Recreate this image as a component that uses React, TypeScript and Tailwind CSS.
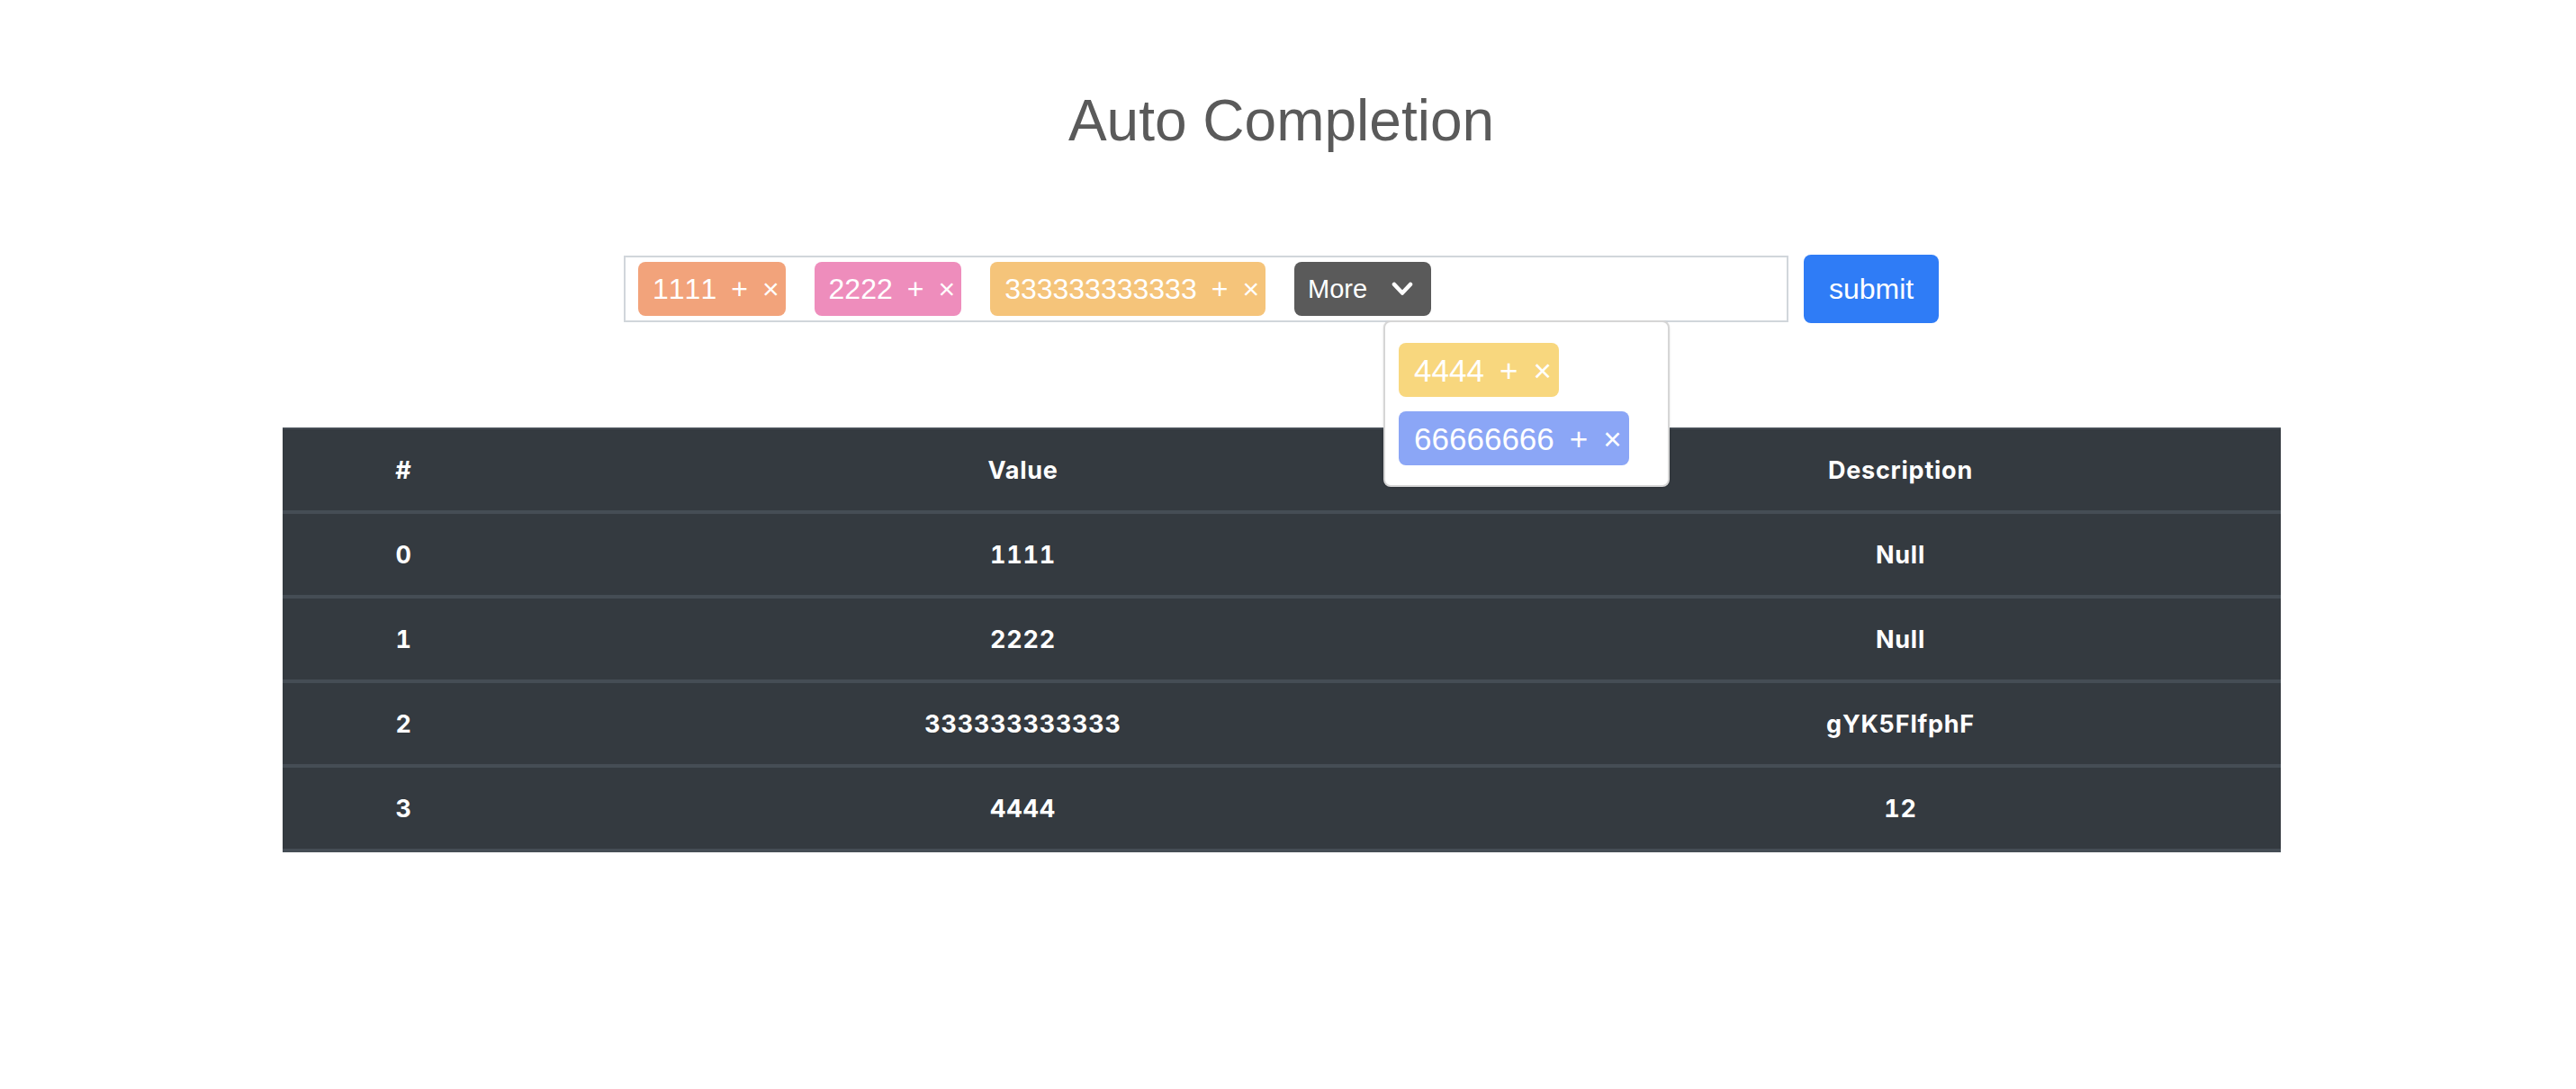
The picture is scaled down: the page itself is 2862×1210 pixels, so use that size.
type Tag = {
  label: string;
  color: string;
};

const inputTags: Tag[] = [
  { label: "1111", color: "bg-[#f2a37b]" },
  { label: "2222", color: "bg-[#ee8dbc]" },
  { label: "333333333333", color: "bg-[#f5c47a]" },
];

const moreTags: Tag[] = [
  { label: "4444", color: "bg-[#f8d77e]" },
  { label: "66666666", color: "bg-[#8ba6f6]" },
];

const rows = [
  { id: 0, value: "1111", description: "Null" },
  { id: 1, value: "2222", description: "Null" },
  { id: 2, value: "333333333333", description: "gYK5FlfphF" },
  { id: 3, value: "4444", description: "12" },
];

const Chip = ({ tag, big }: { tag: Tag; big?: boolean }) => {
  return (
    <span
      className={`${tag.color} ${
        big ? "text-[35px] pl-[17px] pr-[8px] gap-[17px]" : "text-[32px] pl-[16px] pr-[7px] gap-[16px]"
      } h-[60px] flex items-center rounded-[8px] text-white leading-none whitespace-nowrap [font-kerning:none]`}
    >
      <span>{tag.label}</span>
      <span>+</span>
      <span>×</span>
    </span>
  );
};

const MoreMenu = () => {
  return (
    <div className="relative">
      <button className="h-[60px] flex items-center rounded-[8px] bg-[#5a5a5a] text-white text-[29px] leading-none pl-[15px] pr-[20px]">
        <span>More</span>
        <svg className="ml-[27px]" width="24" height="16" viewBox="0 0 24 16" fill="none">
          <polyline points="3,3 12,12.5 21,3" stroke="white" strokeWidth="4.5" strokeLinecap="round" strokeLinejoin="round" />
        </svg>
      </button>
      <div className="absolute left-[99px] top-[65px] z-10 w-[318px] h-[185px] bg-white border-2 border-[#d6d6d6] rounded-[8px] shadow-sm pt-[23px] pl-[15px] flex flex-col items-start gap-[16px]">
        {moreTags.map((tag, idx) => (
          <Chip tag={tag} big key={idx} />
        ))}
      </div>
    </div>
  );
};

export default function App() {
  return (
    <div className="w-[2847px] min-h-[1210px] bg-white flex flex-col items-center font-['Liberation_Sans',Arial,sans-serif]">
      <h1 className="mt-[102px] text-[64px] leading-none text-[#5a5a5a] font-normal">
        Auto Completion
      </h1>

      <div className="mt-[117px] flex items-center gap-[17px]">
        <div className="w-[1294px] h-[74px] border-2 border-[#d1d6db] pt-[5px] pl-[14px] flex items-start gap-[32px]">
          {inputTags.map((tag, idx) => (
            <Chip tag={tag} key={idx} />
          ))}
          <MoreMenu />
        </div>
        <button className="w-[150px] h-[76px] rounded-[8px] bg-[#2f7cf6] text-white text-[32px] leading-none">
          submit
        </button>
      </div>

      <div className="mt-[116px] w-[2220px] bg-[#343a40] border-t-2 border-[#454d55] text-white font-['Inter',sans-serif] font-bold text-[27px] tracking-[0.75px] tabular-nums">
        <div className="grid grid-cols-[270px_1106px_844px] h-[94px] pt-[3px] border-b-4 border-[#454d55] items-center text-center">
          <div>#</div>
          <div>Value</div>
          <div>Description</div>
        </div>
        {rows.map((row) => (
          <div
            key={row.id}
            className="grid grid-cols-[270px_1106px_844px] h-[94px] pt-[3px] border-b-4 border-[#454d55] items-center text-center"
          >
            <div>{row.id}</div>
            <div>{row.value}</div>
            <div>{row.description}</div>
          </div>
        ))}
      </div>
    </div>
  );
}
